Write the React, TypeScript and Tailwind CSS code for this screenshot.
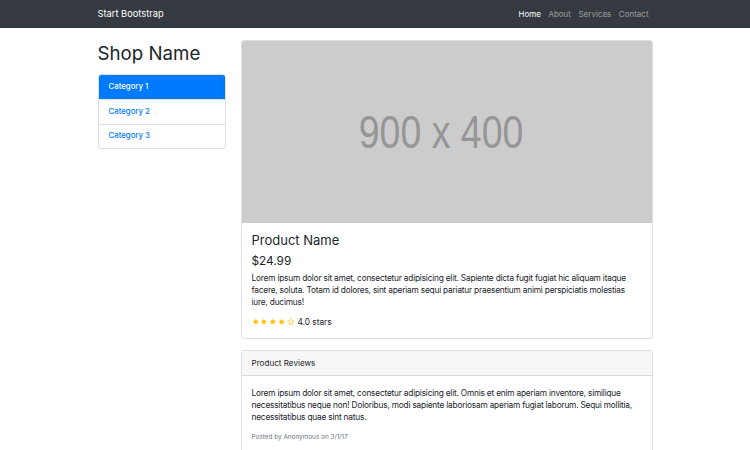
const font = { fontFamily: "Inter, 'Noto Sans', sans-serif" };

function Star({ filled }: { filled: boolean }) {
  return (
    <svg viewBox="0 0 24 24" className="h-[7.5px] w-[7.5px]">
      <path
        d="M12 2l3 6.3 6.9.9-5.1 4.8 1.3 6.8L12 17.5l-6.1 3.3 1.3-6.8-5.1-4.8 6.9-.9z"
        fill={filled ? "#ffc107" : "none"}
        stroke="#ffc107"
        strokeWidth={filled ? 0 : 2}
        strokeLinejoin="round"
      />
    </svg>
  );
}

export default function App() {
  const categories = ["Category 1", "Category 2", "Category 3"];
  return (
    <div className="min-h-[450px] bg-white text-[#212529]" style={font}>
      <nav className="h-[28px] bg-[#343a40]">
        <div className="mx-auto flex h-full w-[555px] items-center justify-between">
          <span className="text-[9.3px] text-white">Start Bootstrap</span>
          <div className="flex gap-[7.5px] pr-[4px] text-[8px] text-white/50">
            <span className="text-white">Home</span>
            <span>About</span>
            <span>Services</span>
            <span>Contact</span>
          </div>
        </div>
      </nav>

      <div className="mx-auto flex w-[555px] gap-[15px] pt-[12px]">
        <aside className="w-[128px] shrink-0">
          <h1 className="text-[18.7px] leading-[27px] font-normal">
            Shop Name
          </h1>
          <div className="mt-[7px] overflow-hidden rounded-[3px] border border-black/[0.125]">
            {categories.map((c, i) => (
              <div
                key={c}
                className={
                  i === 0
                    ? "flex h-[24px] items-center bg-[#007bff] px-[10px] text-[7.8px] font-medium text-white"
                    : "flex h-[24.5px] items-center border-t border-black/[0.125] px-[10px] text-[7.8px] font-medium text-[#007bff]"
                }
              >
                {c}
              </div>
            ))}
          </div>
        </aside>

        <main className="w-[412px] shrink-0">
          <div className="overflow-hidden rounded-[3px] border border-black/[0.125]">
            <div className="flex h-[182px] items-center justify-center bg-[#cccccc] pr-[11px]">
              <span
                className="inline-block scale-x-[0.815] text-[46px] text-[#969696]"
                style={{ fontFamily: "'Liberation Sans', Arial, sans-serif" }}
              >
                900 x 400
              </span>
            </div>
            <div className="px-[10px] pt-[9px] pb-[10px]">
              <h3 className="text-[13px] leading-[17px] font-normal">
                Product Name
              </h3>
              <h4 className="mt-[5px] text-[11.8px] leading-[14px] font-normal">
                $24.99
              </h4>
              <p className="mt-[4px] text-[8.3px] leading-[12px] tracking-[-0.2px]">
                Lorem ipsum dolor sit amet, consectetur adipisicing elit.
                Sapiente dicta fugit fugiat hic aliquam itaque facere, soluta.
                Totam id dolores, sint aperiam sequi pariatur praesentium animi
                perspiciatis molestias iure, ducimus!
              </p>
              <div className="mt-[8px] flex items-center gap-[1.3px] text-[8.3px] leading-[12px]">
                <Star filled />
                <Star filled />
                <Star filled />
                <Star filled />
                <Star filled={false} />
                <span className="ml-[2px]">4.0 stars</span>
              </div>
            </div>
          </div>

          <div className="mt-[11px] rounded-t-[3px] border border-b-0 border-black/[0.125]">
            <div className="flex h-[25px] items-center border-b border-black/[0.125] bg-[#f7f7f7] px-[10px] text-[8.1px]">
              Product Reviews
            </div>
            <div className="px-[10px] pt-[11px]">
              <p className="text-[8.3px] leading-[12px] tracking-[-0.2px]">
                Lorem ipsum dolor sit amet, consectetur adipisicing elit. Omnis
                et enim aperiam inventore, similique necessitatibus neque non!
                Doloribus, modi sapiente laboriosam aperiam fugiat laborum.
                Sequi mollitia, necessitatibus quae sint natus.
              </p>
              <div className="mt-[9px] text-[6.4px] leading-[10px] text-[#6c757d]">
                Posted by Anonymous on 3/1/17
              </div>
              <hr className="mt-[8px] border-black/10" />
            </div>
          </div>
        </main>
      </div>
    </div>
  );
}
